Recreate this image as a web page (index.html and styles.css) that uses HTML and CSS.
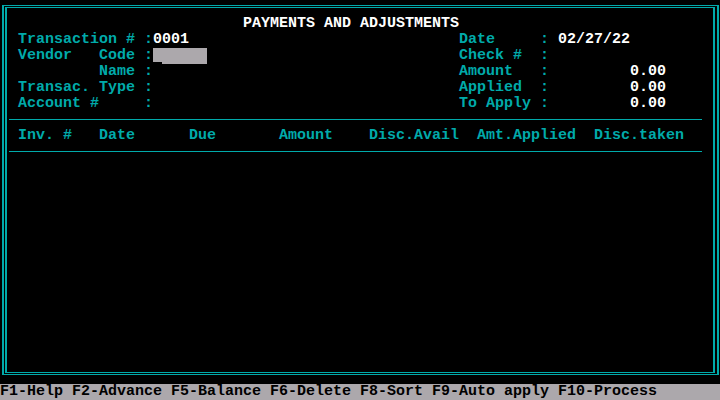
FILE: index.html
```html
<!DOCTYPE html>
<html lang="en">
<head>
  <meta charset="UTF-8">
  <meta name="viewport" content="width=device-width, initial-scale=1.0">
  <title>Payments and Adjustments</title>
  <link rel="stylesheet" href="styles.css">
</head>
<body>

  <div class="screen">
    <div class="frame">
      <div class="panel">
        <h1 class="title">PAYMENTS AND ADJUSTMENTS</h1>

        <div class="head">
          <div class="fields left">
            <div class="row"><span class="lbl">Transaction #</span><span class="lbl">:</span><span class="val">0001</span></div>
            <div class="row"><span class="lbl">Vendor   Code</span><span class="lbl">:</span><span class="input"><span class="cursor"></span></span></div>
            <div class="row"><span class="lbl">         Name</span><span class="lbl">:</span><span class="val"></span></div>
            <div class="row"><span class="lbl">Transac. Type</span><span class="lbl">:</span><span class="val"></span></div>
            <div class="row"><span class="lbl">Account #</span><span class="lbl">:</span><span class="val"></span></div>
          </div>
          <div class="fields right">
            <div class="row"><span class="lbl">Date</span><span class="lbl">:</span><span class="val date">02/27/22</span></div>
            <div class="row"><span class="lbl">Check #</span><span class="lbl">:</span><span class="val"></span></div>
            <div class="row"><span class="lbl">Amount</span><span class="lbl">:</span><span class="val num">0.00</span></div>
            <div class="row"><span class="lbl">Applied</span><span class="lbl">:</span><span class="val num">0.00</span></div>
            <div class="row"><span class="lbl">To Apply</span><span class="lbl">:</span><span class="val num">0.00</span></div>
          </div>
        </div>

        <div class="rule"></div>
        <div class="cols">
          <span>Inv. #</span>
          <span>Date</span>
          <span>Due</span>
          <span>Amount</span>
          <span>Disc.Avail</span>
          <span>Amt.Applied</span>
          <span>Disc.taken</span>
        </div>
        <div class="rule"></div>
      </div>
    </div>

    <div class="keys">F1-Help F2-Advance F5-Balance F6-Delete F8-Sort F9-Auto apply F10-Process</div>
  </div>

</body>
</html>
```

FILE: styles.css
```css
body{
  margin:0;background:#000;
  font-family:"Liberation Mono","DejaVu Sans Mono",monospace;
  font-size:15px;line-height:16px;font-weight:bold;
}
.screen{width:720px;height:400px;overflow:hidden}

/* double line box */
.frame{
  margin:5px 1px 9px 2px;padding:1px 2px 1px 1px;
  border:solid #00aaaa;border-width:1px 2px;
}
.panel{
  box-sizing:border-box;height:366px;padding:8px 0 0 2px;
  border:solid #00aaaa;border-width:1px 2px;
}

.title{margin:0;padding-left:26ch;font-size:15px;line-height:16px;color:#fff;font-weight:bold}

.head{display:flex;padding-left:1ch}
.fields.left{width:49ch}
.row{display:grid;height:16px}
.left .row{grid-template-columns:14ch 1ch 6ch}
.right .row{grid-template-columns:9ch 1ch 13ch}
.lbl{color:#00aaaa;white-space:pre}
.val{color:#fff}
.date{padding-left:1ch}
.num{text-align:right}
.input{background:#aca8ac;height:16px}
.cursor{display:block;width:1ch;height:16px;box-shadow:inset 0 -2px 0 #000}

.rule{width:77ch;margin:7px 0 8px;border-top:1px solid #00aaaa}
.cols{
  display:grid;grid-template-columns:9ch 10ch 10ch 10ch 12ch 13ch auto;
  padding-left:1ch;color:#00aaaa;height:16px;
}

.keys{height:16px;background:#aca8ac;color:#000;white-space:pre}
```
